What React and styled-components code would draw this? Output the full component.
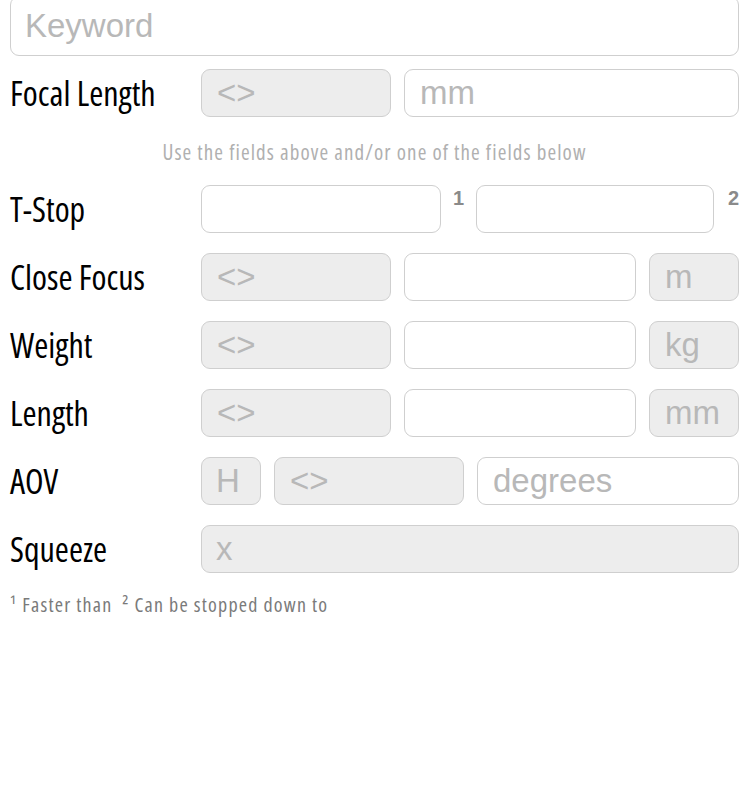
import React from 'react'
import styled, { createGlobalStyle } from 'styled-components'

const GlobalStyle = createGlobalStyle`
  body {
    margin: 0;
    background: #fff;
    overflow: hidden;
  }
`

const condensed = `"Open Sans", "DejaVu Sans", sans-serif`

const Page = styled.div`
  width: 750px;
  height: 800px;
  padding: 0 11px 0 10px;
  box-sizing: border-box;
  margin-top: -4px;
`

const Field = styled.div`
  flex: ${(p) => (p.w ? `0 0 ${p.w}px` : '1 1 0')};
  height: ${(p) => p.h || 48}px;
  box-sizing: border-box;
  border: 1px solid #cfcfcf;
  border-radius: 9px;
  background: ${(p) => (p.grey ? '#ededed' : '#fff')};
  display: flex;
  align-items: center;
  padding-left: ${(p) => p.pad || 15}px;
  font-family: "Liberation Sans", Arial, sans-serif;
  font-size: 33px;
  color: #b8b8b8;
  white-space: nowrap;
  overflow: hidden;
`

const Row = styled.div`
  display: flex;
  align-items: center;
  margin-top: ${(p) => p.top ?? 20}px;
`

const Label = styled.div`
  flex: 0 0 191px;
  font-family: ${condensed};
  font-stretch: 75%;
  font-size: 34px;
  color: #000;
  line-height: 48px;
  white-space: nowrap;
`

const Controls = styled.div`
  flex: 1;
  display: flex;
  gap: ${(p) => p.gap ?? 13}px;
  align-items: center;
`

const Hint = styled.div`
  margin-top: 20px;
  text-align: center;
  font-family: ${condensed};
  font-stretch: 75%;
  font-size: 21px;
  letter-spacing: 1.1px;
  color: #b0b0b0;
  line-height: 30px;
  height: 30px;
  white-space: nowrap;
`

const Sup = styled.span`
  flex: 0 0 ${(p) => p.w}px;
  align-self: flex-start;
  margin-top: 2px;
  font-family: "Liberation Sans", Arial, sans-serif;
  font-weight: bold;
  font-size: 20px;
  color: #8a8a8a;
  text-align: ${(p) => p.align || 'center'};
`

const Note = styled.div`
  margin-top: 18px;
  font-family: ${condensed};
  font-stretch: 75%;
  font-size: 20px;
  letter-spacing: 1.2px;
  color: #7a7a7a;
  white-space: nowrap;
`

const unitRows = [
  ['Close Focus', 'm'],
  ['Weight', 'kg'],
  ['Length', 'mm'],
]

export default function App() {
  return (
    <>
      <GlobalStyle />
      <Page>
        <Row top={0}>
          <Field h={60} pad={14}>Keyword</Field>
        </Row>

        <Row top={13}>
          <Label>Focal Length</Label>
          <Controls>
            <Field grey w={190}>&lt;&gt;</Field>
            <Field>mm</Field>
          </Controls>
        </Row>

        <Hint>Use the fields above and/or one of the fields below</Hint>

        <Row top={18}>
          <Label>T-Stop</Label>
          <Controls gap={0}>
            <Field w={240} />
            <Sup w={35}>1</Sup>
            <Field />
            <Sup w={25} align="right">2</Sup>
          </Controls>
        </Row>

        {unitRows.map(([label, unit]) => (
          <Row key={label}>
            <Label>{label}</Label>
            <Controls>
              <Field grey w={190}>&lt;&gt;</Field>
              <Field />
              <Field grey w={90}>{unit}</Field>
            </Controls>
          </Row>
        ))}

        <Row>
          <Label>AOV</Label>
          <Controls>
            <Field grey w={60} pad={14}>H</Field>
            <Field grey w={190}>&lt;&gt;</Field>
            <Field>degrees</Field>
          </Controls>
        </Row>

        <Row>
          <Label>Squeeze</Label>
          <Controls>
            <Field grey pad={14}>x</Field>
          </Controls>
        </Row>

        <Note>¹ Faster than&nbsp; ² Can be stopped down to</Note>
      </Page>
    </>
  )
}
